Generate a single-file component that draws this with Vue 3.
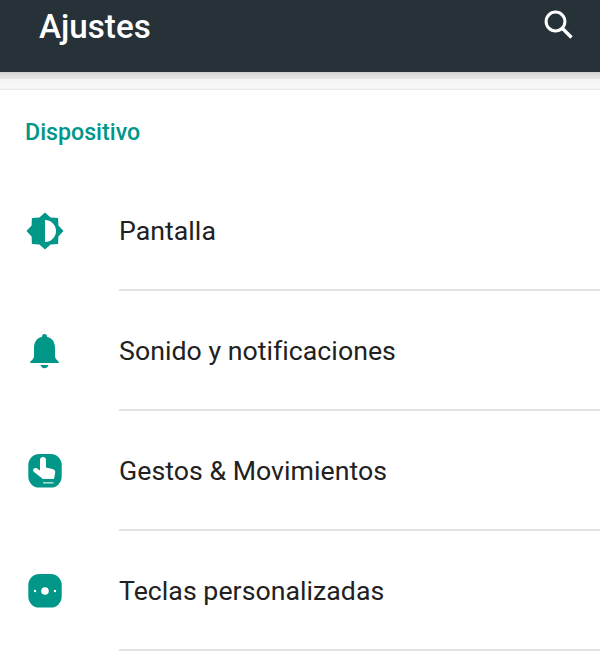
<template>
  <div class="screen">
    <header class="toolbar">
      <h1 class="title">Ajustes</h1>
      <svg class="search" viewBox="0 0 32 32" width="32" height="32" aria-label="Buscar">
        <circle cx="12.5" cy="12.5" r="9.4" fill="none" stroke="#fff" stroke-width="3" />
        <path d="M19.5 19.5 L28.5 28.5" fill="none" stroke="#fff" stroke-width="3.4" />
      </svg>
    </header>
    <div class="shadow-band"></div>
    <section class="panel">
      <div class="section-title">Dispositivo</div>
      <div v-for="item in items" :key="item.label" class="row">
        <div class="icon">
          <svg viewBox="0 0 40 40" width="40" height="40">
            <template v-if="item.icon === 'brightness'">
              <path fill="#009688" fill-rule="evenodd" d="M20 1.5 L25.6 6.6 L33.1 6.9 L33.4 14.4 L38.5 20 L33.4 25.6 L33.1 33.1 L25.6 33.4 L20 38.5 L14.4 33.4 L6.9 33.1 L6.6 25.6 L1.5 20 L6.6 14.4 L6.9 6.9 L14.4 6.6 Z M20 9 L20 31 A11 11 0 0 0 20 9 Z" />
            </template>
            <template v-else-if="item.icon === 'bell'">
              <path fill="#009688" d="M19.5 3 C21 3 22 4.1 22 5.7 C27.6 7 30 11.6 30 17 L30 25 C30 27.5 32 29 33.7 30.6 L33.7 32 L5.3 32 L5.3 30.6 C7 29 9 27.5 9 25 L9 17 C9 11.6 11.4 7 17 5.7 C17 4.1 18 3 19.5 3 Z" />
              <path fill="#009688" d="M15.5 34 L23.5 34 C23.1 36 21.5 37.2 19.5 37.2 C17.5 37.2 15.9 36 15.5 34 Z" />
            </template>
            <template v-else-if="item.icon === 'gesture'">
              <rect x="3.3" y="3" width="33.4" height="33.6" rx="11" fill="#009688" />
              <path fill="#fff" d="M15 9 C15 7.2 16.3 6 18 6 C19.7 6 21 7.2 21 9 L21 16.5 L27.4 18 C29.4 18.5 30.4 19.8 30.2 21.6 L29 28 L18 28 L9 21 C7.8 20 7.9 18.4 8.8 17.6 C9.7 16.8 11 16.8 12 17.4 L15 19.4 Z" />
              <rect x="18" y="31" width="10.5" height="1.6" fill="#a8dbd5" />
            </template>
            <template v-else>
              <rect x="3.3" y="3" width="33.4" height="33.6" rx="11" fill="#009688" />
              <circle cx="20" cy="20" r="3.8" fill="#fff" />
              <circle cx="10" cy="20" r="1.2" fill="#fff" />
              <circle cx="30" cy="20" r="1.2" fill="#fff" />
            </template>
          </svg>
        </div>
        <div class="label">{{ item.label }}</div>
      </div>
    </section>
  </div>
</template>

<script setup>
const items = [
  { label: 'Pantalla', icon: 'brightness' },
  { label: 'Sonido y notificaciones', icon: 'bell' },
  { label: 'Gestos & Movimientos', icon: 'gesture' },
  { label: 'Teclas personalizadas', icon: 'keys' }
]
</script>

<style>
html, body {
  margin: 0;
  background: #fff;
  overflow: hidden;
}
</style>

<style scoped>
.screen {
  width: 600px;
  height: 653px;
  overflow: hidden;
  font-family: Roboto, "Liberation Sans", sans-serif;
  background: #fff;
}
.toolbar {
  height: 72px;
  background: #263238;
  display: flex;
  align-items: flex-start;
  justify-content: space-between;
  padding: 0 25px 0 39px;
  box-sizing: border-box;
}
.title {
  margin: 9px 0 0;
  font-size: 33.2px;
  line-height: 36px;
  font-weight: 500;
  color: #fff;
}
.search {
  margin-top: 9px;
}
.shadow-band {
  height: 18px;
  box-sizing: border-box;
  background: linear-gradient(#cfcfcf 0, #e6e6e6 5px, #dcdcdc 6px, #f4f4f4 7px, #f7f7f7 16px, #e4e4e4 18px);
}
.panel {
  background: #fff;
}
.section-title {
  height: 81px;
  box-sizing: border-box;
  padding: 29px 0 0 25px;
  font-size: 23.2px;
  line-height: 26px;
  font-weight: 500;
  color: #009688;
}
.row {
  height: 120px;
  display: flex;
  align-items: center;
}
.icon {
  width: 119px;
  padding-left: 25px;
  box-sizing: border-box;
  display: flex;
  flex-shrink: 0;
}
.label {
  flex: 1;
  height: 120px;
  box-sizing: border-box;
  border-bottom: 2px solid #e2e2e2;
  font-size: 26.7px;
  line-height: 121px;
  letter-spacing: 0.03px;
  color: #212121;
}
</style>
